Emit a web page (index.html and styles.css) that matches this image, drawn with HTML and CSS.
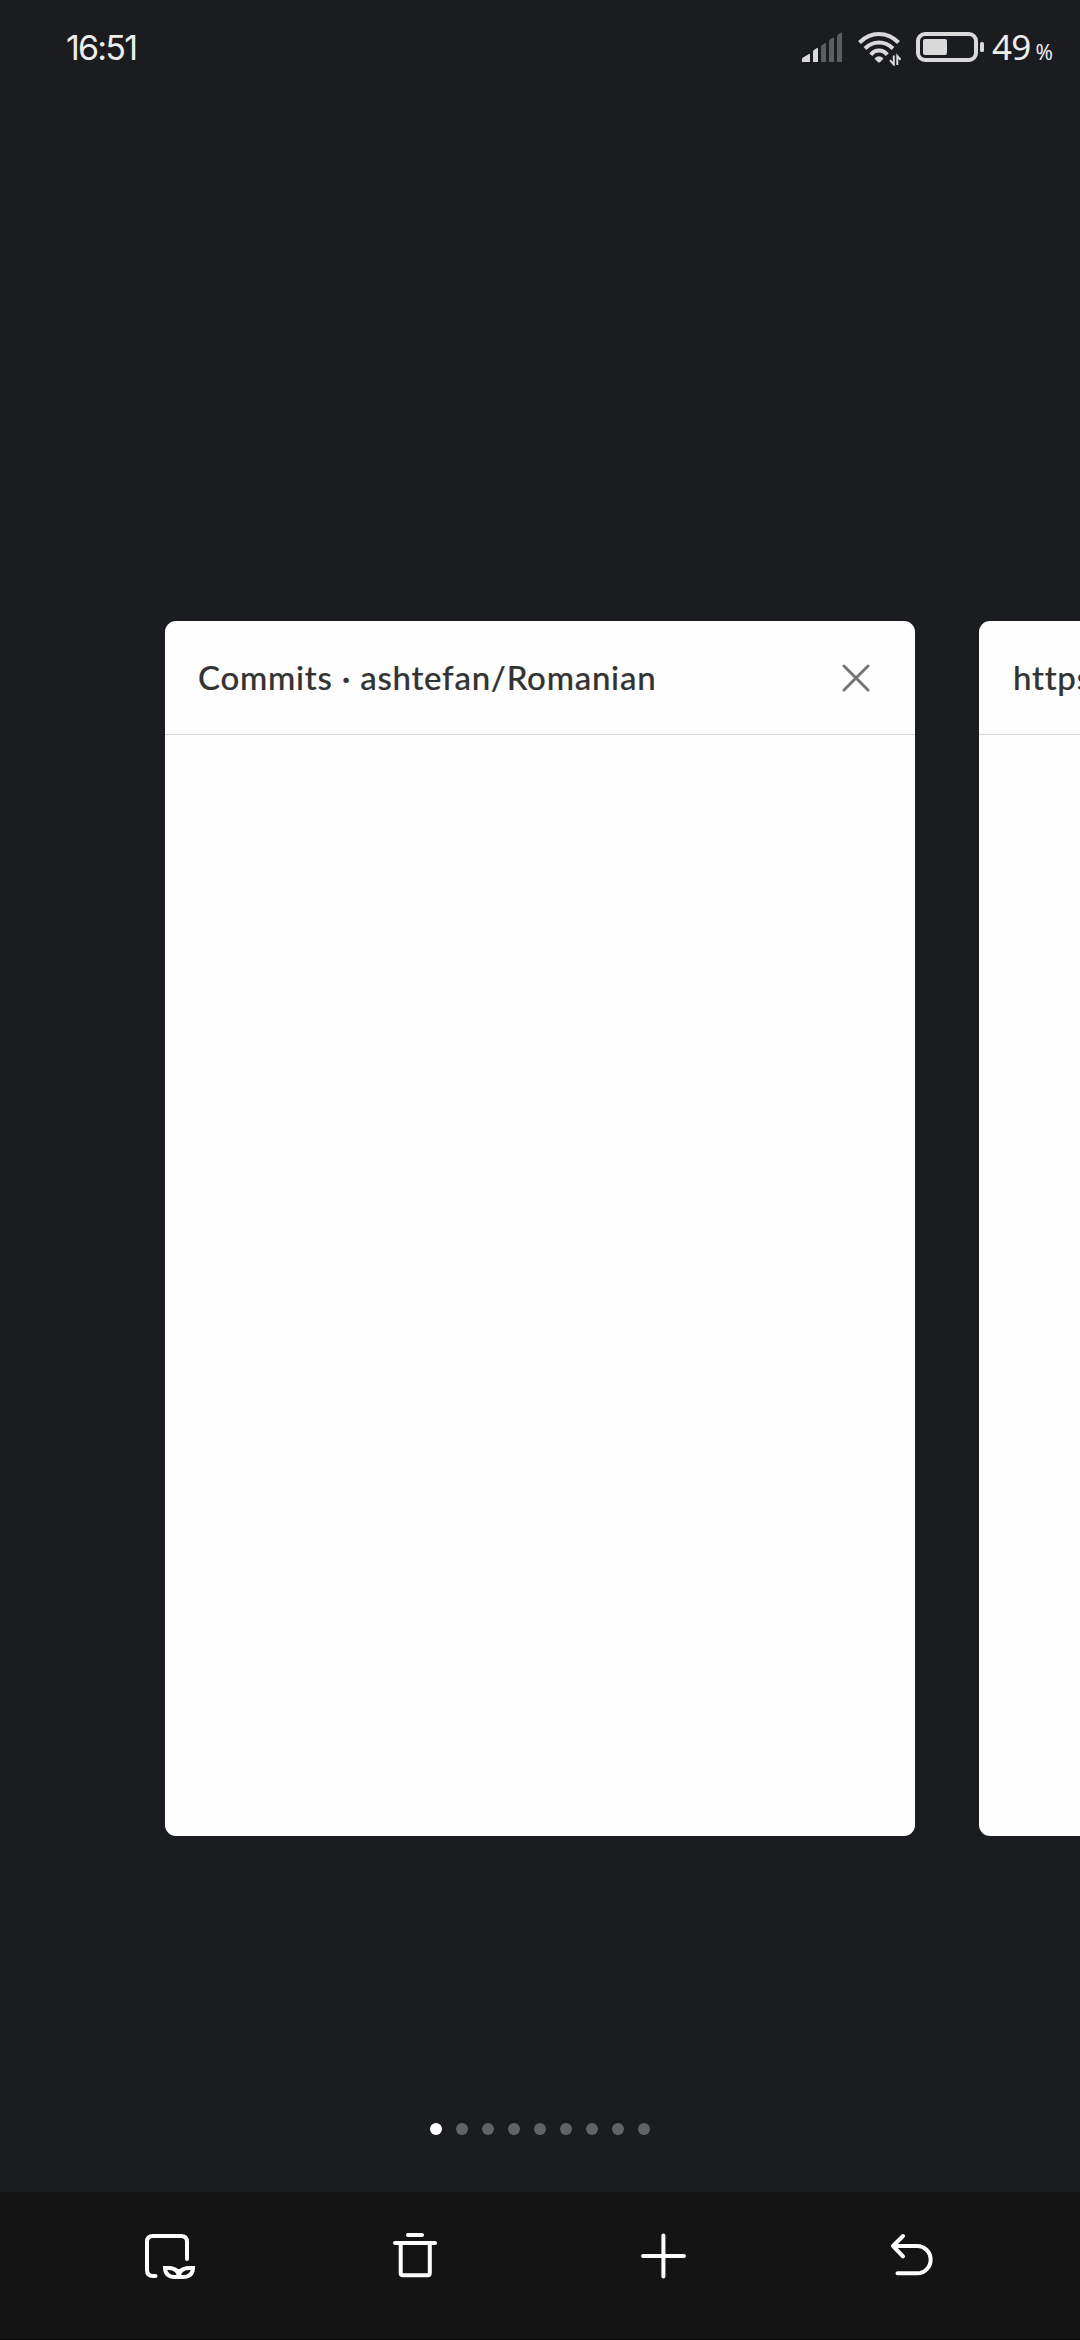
FILE: index.html
```html
<!DOCTYPE html>
<html lang="en">
<head>
<meta charset="utf-8">
<title>Tabs</title>
<link rel="stylesheet" href="styles.css">
</head>
<body>
<div class="screen">
  <header class="status">
    <span class="clock">16:51</span>
    <div class="indicators">
      <svg class="signal" width="40" height="30" viewBox="0 0 40 30" fill="#d9d9d9">
        <path d="M0 30V27Q0 26 1 25.400L7 22Q8 21.500 8 22.500V30ZM11 30V20Q11 18.500 12 18L15 16Q16 15.500 16 17V30Z"/>
        <path fill="#5c5d5f" d="M19 30V15Q19 13.500 20 13L23 11Q24 10.500 24 12V30ZM27 30V9.500Q27 8 28 7.400L31 5.500Q32 5 32 6.500V30ZM35 30V5Q35 3.500 36 2.500L39 .5Q40 0 40 1.500V30Z"/>
      </svg>
      <svg class="wifi" width="44" height="34" viewBox="0 0 44 34" fill="none" stroke="#d9d9d9" stroke-width="4">
        <path d="M2.500 10.500Q11 2 22 2T41.500 10.500"/>
        <path d="M8 16.500Q14 10.500 22 10.500T36 16.500"/>
        <path d="M13.800 22.700Q17 18.500 22 18.500T30.200 22.700"/>
        <path fill="#d9d9d9" stroke="none" d="M17.500 26.500Q22 22 26.500 26.500L23 30.200Q22 31 21 30.200Z"/>
        <path stroke-width="2" d="M36.800 23.500V32.500L33 28.200M40.300 33V24L43.500 27.800"/>
      </svg>
      <svg class="battery" width="68" height="30" viewBox="0 0 68 30">
        <rect x="2" y="2" width="58" height="26" rx="7" fill="none" stroke="#d9d9d9" stroke-width="4"/>
        <rect x="7" y="7" width="24" height="16" rx="2" fill="#d9d9d9"/>
        <rect x="64" y="10" width="4" height="10" rx="1.500" fill="#d9d9d9"/>
      </svg>
      <span class="level">49</span><span class="percent">%</span>
    </div>
  </header>

  <main class="tabs">
    <article class="tab">
      <div class="tab-head">
        <h1 class="tab-title">Commits · ashtefan/Romanian</h1>
        <svg class="close" width="28" height="28" viewBox="0 0 28 28" fill="none" stroke="#757575" stroke-width="3" stroke-linecap="round"><path d="M2 2L26 26M26 2L2 26"/></svg>
      </div>
    </article>
    <article class="tab next">
      <div class="tab-head"><h1 class="tab-title">https://</h1></div>
    </article>
  </main>

  <div class="pager">
    <i class="dot active"></i><i class="dot"></i><i class="dot"></i><i class="dot"></i><i class="dot"></i><i class="dot"></i><i class="dot"></i><i class="dot"></i><i class="dot"></i>
  </div>

  <nav class="toolbar">
    <svg class="tool" viewBox="0 0 64 64"><path d="M51 35V18Q51 12 45 12H17Q11 12 11 18V46Q11 52 17 52H19.500"/><path stroke-linecap="butt" stroke-linejoin="miter" d="M42.800 53H39Q29.500 53 29 44H33Q42.800 44.500 42.800 53H47Q56.500 53 57 44H53Q42.800 44.500 42.800 53V45"/></svg>
    <svg class="tool" viewBox="0 0 64 64"><path d="M24 11H38M11 19H51M16.700 19V49Q16.700 51.300 19 51.300H43.500Q45.800 51.300 45.800 49V19"/></svg>
    <svg class="tool" viewBox="0 0 64 64"><path d="M11 32H52M31.400 11.500V52.500"/></svg>
    <svg class="tool" viewBox="0 0 64 64"><path d="M23 12L13 22L23 32.300M13 22H37A13.650 13.650 0 0 1 37 49.300H17.500"/></svg>
  </nav>
</div>
</body>
</html>
```
FILE: styles.css
```css
* { box-sizing: border-box; }
body { margin: 0; background: #1b1c20; }
.screen {
  width: 1080px;
  height: 2340px;
  display: flex;
  flex-direction: column;
  overflow: hidden;
  background: #1b1c20;
}
.status {
  height: 94px;
  padding: 0 27px 0 66px;
  display: flex;
  align-items: center;
  justify-content: space-between;
  color: #ededed;
}
.clock {
  margin-top: 2px;
  font: 400 34px/94px Inter, sans-serif;
  letter-spacing: -1.800px;
}
.indicators { display: flex; align-items: center; }
.wifi { margin: 4px 0 0 15px; }
.battery { margin-left: 15px; }
.level {
  margin-left: 8px;
  font: 400 35px/94px "Noto Sans", sans-serif;
  letter-spacing: -.8px;
}
.percent {
  margin: 9px 0 0 5px;
  font: 400 21px/24px "Noto Sans", sans-serif;
}
.tabs {
  flex: none;
  height: 1742px;
  padding: 527px 0 0 165px;
  display: flex;
  gap: 64px;
}
.tab {
  flex: none;
  width: 750px;
  height: 1215px;
  border-radius: 11px;
  overflow: hidden;
  background: #fefefe;
}
.tab-head {
  height: 114px;
  padding: 0 45px 0 33px;
  display: flex;
  align-items: center;
  justify-content: space-between;
  border-bottom: 1px solid #d5d5d5;
}
.next .tab-head { padding-left: 34px; }
.tab-title {
  margin: 0 0 2px;
  font: 500 33px/40px Lato, sans-serif;
  font-variant-ligatures: none;
  letter-spacing: .75px;
  color: #333;
  -webkit-text-stroke: .2px #333;
  white-space: nowrap;
}
.pager {
  flex: 1;
  padding-top: 287px;
  display: flex;
  justify-content: center;
  gap: 14px;
}
.dot { width: 12px; height: 12px; border-radius: 50%; background: #626365; }
.dot.active { background: #fff; }
.toolbar {
  flex: none;
  height: 148px;
  padding: 32px 44px 0;
  display: grid;
  grid-template-columns: repeat(4, 1fr);
  justify-items: center;
  align-items: start;
  background: #141414;
  border-bottom: 1px solid #080305;
}
.tool {
  width: 64px;
  height: 64px;
  fill: none;
  stroke: #fff;
  stroke-width: 4;
  stroke-linecap: round;
  stroke-linejoin: round;
}
```
